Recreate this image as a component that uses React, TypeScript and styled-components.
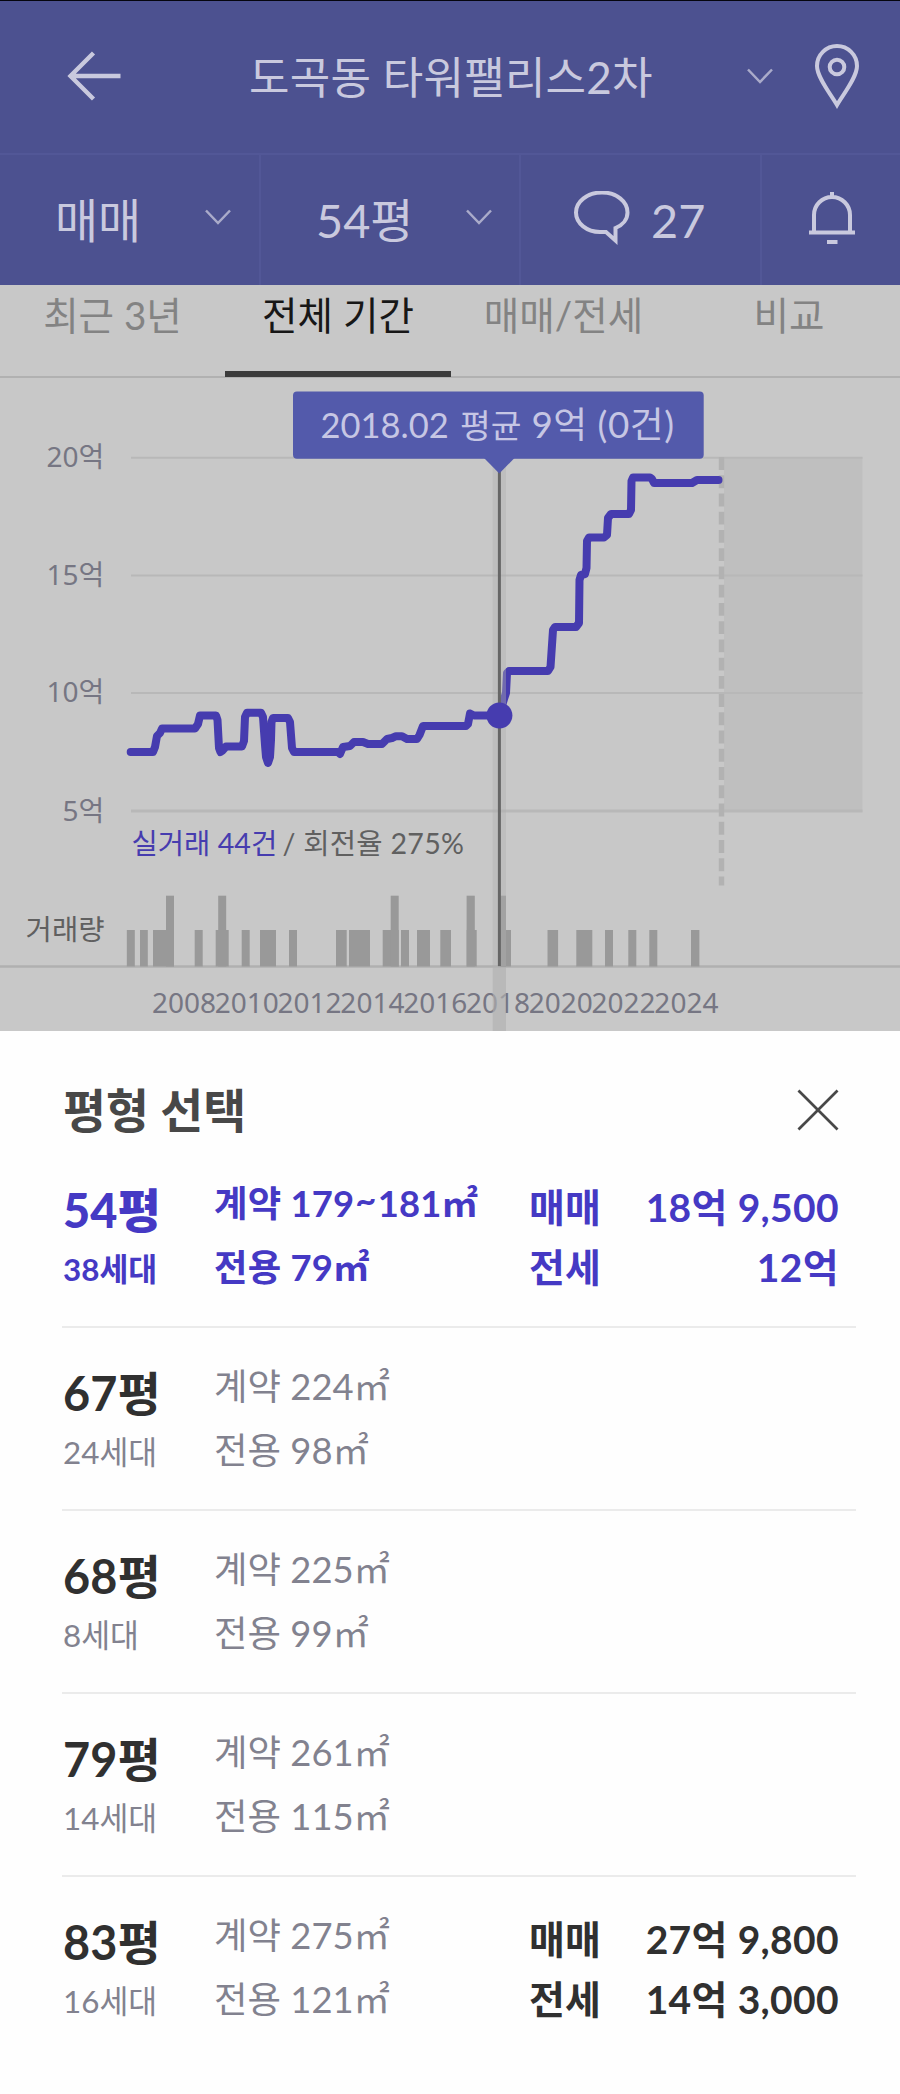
import React from 'react';
import styled, { createGlobalStyle } from 'styled-components';

const fontUi = `Lato, 'Noto Sans CJK KR', sans-serif`;
const fontAxis = `'Noto Sans', 'Noto Sans CJK KR', sans-serif`;

const color = {
  bar: '#4c5190',
  barLine: '#525797',
  barText: '#c9c9de',
  dim: '#c8c8c8',
  line: '#463caf',
  accent: '#4539c4',
  ink: '#303030',
  muted: '#82828f',
};

const GlobalStyle = createGlobalStyle`
  * { box-sizing: border-box; }
  body { margin: 0; background: #fff; font-family: ${fontUi}; }
`;

const Page = styled.main`
  width: 900px;
  height: 2094px;
  overflow: hidden;
  display: flex;
  flex-direction: column;
  background: #fefefe;
`;

const TitleBar = styled.header`
  height: 153px;
  border-top: 1px solid #05050f;
  background: ${color.bar};
  color: ${color.barText};
  display: flex;
  align-items: center;
  padding: 0 40px 2px 66px;
`;

const BackButton = styled.button`
  all: unset;
  display: flex;
  width: 183px;
`;

const ComplexName = styled.h1`
  margin: 0;
  padding-top: 2px;
  flex: 1;
  font-size: 44px;
  font-weight: 400;
  line-height: 60px;
  letter-spacing: 0.25px;
  white-space: nowrap;
`;

const Icon = styled.svg`
  display: block;
  flex: none;
  fill: none;
  stroke: currentColor;
`;

const TitleActions = styled.div`
  display: flex;
  align-items: center;
  gap: 41px;
`;

const FilterBar = styled.div`
  height: 132px;
  background: ${color.bar};
  color: ${color.barText};
  border-top: 2px solid ${color.barLine};
  display: grid;
  grid-template-columns: 261px 260px 241px 1fr;
`;

const FilterCell = styled.button<{ $pad: string; $between?: boolean }>`
  all: unset;
  box-sizing: border-box;
  display: flex;
  align-items: center;
  justify-content: ${(p) => (p.$between ? 'space-between' : 'flex-start')};
  gap: 20px;
  padding: ${(p) => p.$pad};
  border-right: 2px solid ${color.barLine};
  font-size: 46.8px;
  line-height: 60px;
  &:last-child { border-right: 0; }
  ${Icon} { margin-bottom: ${(p) => (p.$between ? '7px' : '0')}; }
`;

const Tabs = styled.nav`
  height: 93px;
  background: ${color.dim};
  border-bottom: 2px solid #b1b1b1;
  display: grid;
  grid-template-columns: 225px 226px 225px 226px;
`;

const Tab = styled.button<{ $active?: boolean }>`
  all: unset;
  box-sizing: border-box;
  height: 92px;
  display: flex;
  justify-content: center;
  align-items: flex-start;
  font-size: 38.6px;
  line-height: 60px;
  white-space: nowrap;
  color: ${(p) => (p.$active ? '#171717' : '#838383')};
  border-bottom: ${(p) => (p.$active ? '6px solid #3c3c3c' : '0')};
`;

const ChartSvg = styled.svg`
  display: block;
  flex: none;
  background: ${color.dim};
`;

const AxisText = styled.text`
  font-family: ${fontAxis};
  font-size: 28px;
  fill: #767683;
`;

const NoteText = styled.text<{ $fill?: string }>`
  font-family: ${fontUi};
  font-size: 28.6px;
  fill: ${(p) => p.$fill ?? '#606060'};
`;

const TipText = styled.text<{ $size: number }>`
  font-family: ${fontUi};
  font-size: ${(p) => p.$size}px;
  fill: #c6c6e4;
`;

const Sheet = styled.section`
  flex: 1;
  background: #fefefe;
  padding: 49px 44px 0 62px;
`;

const SheetHeader = styled.div`
  display: flex;
  justify-content: space-between;
  height: 65px;
  padding: 0 17px 0 1px;
  color: #484848;
`;

const SheetTitle = styled.h2`
  margin: 0;
  font-size: 46.7px;
  line-height: 60px;
  font-weight: 700;
`;

const CloseButton = styled.button`
  all: unset;
  display: flex;
  height: 60px;
  align-items: center;
`;

const List = styled.ul`
  list-style: none;
  margin: 0;
  padding: 0;
`;

const SizeRow = styled.li<{ $selected?: boolean }>`
  height: 183px;
  display: grid;
  grid-template-columns: 152px 315px 1fr;
  padding-right: 17px;
  color: ${(p) => (p.$selected ? color.accent : color.muted)};
  font-weight: ${(p) => (p.$selected ? 700 : 400)};
  border-bottom: 2px solid #ebebeb;
  &:last-child { border-bottom: 0; }
`;

const NameCol = styled.div`
  padding: 35px 0 0 1px;
  display: flex;
  flex-direction: column;
  gap: 9px;
`;

const SizeName = styled.strong<{ $selected?: boolean }>`
  font-size: 46.8px;
  line-height: 60px;
  letter-spacing: 0.2px;
  color: ${(p) => (p.$selected ? color.accent : color.ink)};
`;

const Households = styled.span`
  font-size: 31.4px;
  line-height: 40px;
`;

const AreaCol = styled.div<{ $selected?: boolean }>`
  padding-top: 26px;
  font-size: 36.4px;
  line-height: 64px;
  letter-spacing: ${(p) => (p.$selected ? '0.2px' : '0')};
  white-space: nowrap;
`;

const Tilde = styled.span`
  margin: 0 1px;
  line-height: 0;
  vertical-align: 4px;
`;

const PriceCol = styled.dl<{ $selected?: boolean }>`
  margin: 0;
  padding-top: 32px;
  font-size: 39px;
  font-weight: 700;
  line-height: 60px;
  white-space: nowrap;
  color: ${(p) => (p.$selected ? color.accent : color.ink)};
`;

const PriceLine = styled.div`
  display: flex;
  justify-content: space-between;
  dt, dd { margin: 0; }
  dd { letter-spacing: 0.35px; }
`;

const Chevron = () => (
  <Icon width="26" height="16" viewBox="0 0 26 16" strokeWidth="2.5">
    <path d="M1 1.5 13 14 25 1.5" opacity="0.75" />
  </Icon>
);

// Monthly average price, as plotted points.
const pricePoints: [number, number][] = [
  [130.7, 752], [153, 752], [155, 747], [157, 736], [160, 733], [162, 728.5], [195, 728.5], [198, 724], [200, 715.5],
  [216, 715.5], [217.5, 720], [219, 748], [220.5, 752], [222, 751], [226, 746.5], [242, 746.5], [244, 741],
  [245, 717], [247, 712.8], [261, 712.8], [263, 717], [265, 745], [266, 757], [268, 763], [270, 757], [271, 740],
  [271.5, 722], [273, 718], [288, 718], [290, 722], [292, 748], [294, 752], [338, 752], [340, 754], [343, 747],
  [350, 746], [354, 742], [363, 742], [368, 744], [382, 744], [387, 739], [392, 738], [396, 736.2], [402, 736.2],
  [407, 739], [417, 739], [419.5, 735], [423, 726], [466, 726], [468, 724], [470, 713.5], [474, 715.5],
  [499, 715.5], [504, 699], [506, 693], [507, 673], [509, 671], [548, 671], [550.5, 667], [553, 630], [555, 627],
  [576, 627], [579, 623], [579.5, 580], [581, 575], [585, 574], [586.5, 568], [587, 541], [589, 537.5],
  [604, 537.5], [607, 535], [608, 518], [611, 514], [629, 514], [631, 510], [631.5, 481], [633, 477.5],
  [650, 477.5], [652, 479], [654, 483], [692, 483], [697, 480], [718.5, 480],
];

// Trade volume bars: [x, width].
const lowBars: [number, number][] = [
  [126.8, 8], [140, 7.8], [153, 21], [194.7, 8], [215.7, 13], [241.7, 8], [260, 16], [289, 8], [336, 10.7],
  [349, 21], [382.7, 16], [401, 8], [417, 13], [440.3, 10.7], [466.7, 10], [500, 11], [547.5, 10.6],
  [576.3, 16], [605, 8], [628.3, 8], [649.3, 8], [691, 8.4],
];
const tallBars: [number, number][] = [[166, 8], [218.2, 8], [390.7, 8], [466.6, 8.2], [498, 8]];

const years = [2008, 2010, 2012, 2014, 2016, 2018, 2020, 2022, 2024];

const levels = [
  { label: '20억', y: 457.8, base: 467 },
  { label: '15억', y: 575.5, base: 584.5 },
  { label: '10억', y: 693, base: 702 },
  { label: '5억', y: 811, base: 820.5 },
];

const PriceChart = () => (
  <ChartSvg width="900" height="653" viewBox="0 378 900 653">
    <rect x="724" y="457" width="138.5" height="355" fill="#bfbfbf" />
    {levels.map((l, i) => (
      <g key={l.label}>
        <AxisText x="104.3" y={l.base} textAnchor="end">{l.label}</AxisText>
        <line x1="131" x2="862.5" y1={l.y} y2={l.y} stroke="#b8b8b8" strokeWidth={i === 3 ? 2.8 : 2} />
      </g>
    ))}
    <line x1="721.5" x2="721.5" y1="457" y2="885.5" stroke="#b2b2b2" strokeWidth="5.5" strokeDasharray="12.9 5.34" />
    <NoteText x="131.5" y="854" $fill={color.line}>실거래 44건</NoteText>
    <NoteText x="282.5" y="854" letterSpacing="0.25">/ 회전율 275%</NoteText>
    <NoteText x="104.5" y="939.5" textAnchor="end">거래량</NoteText>
    <line x1="0" x2="900" y1="966.5" y2="966.5" stroke="#b0b0b0" strokeWidth="2.5" />
    {lowBars.map(([x, w]) => <rect key={x} x={x} y="930" width={w} height="36.5" fill="#999" />)}
    {tallBars.map(([x, w]) => <rect key={x} x={x} y="895.7" width={w} height="70.8" fill="#999" />)}
    {years.map((y, i) => (
      <AxisText key={y} x={184 + i * 62.8} y="1012.7" textAnchor="middle">{y}</AxisText>
    ))}
    <polyline
      points={pricePoints.map((p) => p.join(',')).join(' ')}
      fill="none" stroke={color.line} strokeWidth="8" strokeLinejoin="round" strokeLinecap="round"
    />
    <rect x="492.7" y="457" width="13.3" height="509" fill="#b0b0b0" opacity="0.4" />
    <rect x="492.7" y="967.5" width="13.3" height="64" fill="#b0b0b0" opacity="0.65" />
    <line x1="499.4" x2="499.4" y1="460" y2="966" stroke="#666" strokeWidth="3" />
    <circle cx="499.4" cy="715.5" r="13" fill={color.line} />
    <rect x="293" y="391.5" width="410.7" height="67.2" rx="4" fill="#535aab" />
    <path d="M484 458 499.3 473.5 514.5 458Z" fill="#535aab" />
    <TipText x="320.5" y="438" $size={34.5}>2018.02</TipText>
    <TipText x="460" y="438" $size={33.4}>평균</TipText>
    <TipText x="531.5" y="438" $size={36.8} letterSpacing="0.5">9억 (0건)</TipText>
  </ChartSvg>
);

interface Size {
  name: string;
  homes: string;
  contract: string[];
  net: string;
  sale?: string;
  lease?: string;
}

const sizes: Size[] = [
  { name: '54평', homes: '38세대', contract: ['179', '181'], net: '79', sale: '18억 9,500', lease: '12억' },
  { name: '67평', homes: '24세대', contract: ['224'], net: '98' },
  { name: '68평', homes: '8세대', contract: ['225'], net: '99' },
  { name: '79평', homes: '14세대', contract: ['261'], net: '115' },
  { name: '83평', homes: '16세대', contract: ['275'], net: '121', sale: '27억 9,800', lease: '14억 3,000' },
];

export default function App() {
  return (
    <>
      <GlobalStyle />
      <Page>
        <TitleBar>
          <BackButton aria-label="뒤로">
            <Icon width="56" height="50" viewBox="0 0 56 50" strokeWidth="4.4">
              <path d="M54.5 25H4M27.5 2 4.5 25 27.5 48" />
            </Icon>
          </BackButton>
          <ComplexName>도곡동 타워팰리스2차</ComplexName>
          <TitleActions>
            <Chevron />
            <Icon width="46" height="66" viewBox="0 0 46 66" strokeWidth="4">
              <path d="M23 62C17 51.5 3 34.5 3 23a20 20 0 0 1 40 0C43 34.5 29 51.5 23 62Z" />
              <circle cx="23" cy="24" r="7.3" />
            </Icon>
          </TitleActions>
        </TitleBar>
        <FilterBar>
          <FilterCell $pad="0 28px 0 55px" $between>매매<Chevron /></FilterCell>
          <FilterCell $pad="0 27px 0 55px" $between>54평<Chevron /></FilterCell>
          <FilterCell $pad="0 0 0 52px">
            <Icon width="58" height="58" viewBox="0 0 58 58" strokeWidth="4">
              <path d="M29 1.5C14.500 1.5 3 10.5 3 21.500S14 41 27 41H33L42.500 49.500V37C50 34 54.500 28 54.500 21.500 54.500 10.500 43.500 1.500 29 1.500Z" />
            </Icon>
            27
          </FilterCell>
          <FilterCell $pad="0 0 4px 46px">
            <Icon width="48" height="54" viewBox="0 0 48 54" strokeWidth="4">
              <path d="M24 1v6M6 41V24a18 18 0 0 1 36 0V41M1 41.5H47M19 51H29.5" />
            </Icon>
          </FilterCell>
        </FilterBar>
        <Tabs>
          <Tab>최근 3년</Tab>
          <Tab $active>전체 기간</Tab>
          <Tab>매매/전세</Tab>
          <Tab>비교</Tab>
        </Tabs>
        <PriceChart />
        <Sheet>
          <SheetHeader>
            <SheetTitle>평형 선택</SheetTitle>
            <CloseButton aria-label="닫기">
              <Icon width="42" height="42" viewBox="0 0 43 43" strokeWidth="2.8">
                <path d="M1.5 1.5 41.5 41.5M41.5 1.5 1.5 41.5" />
              </Icon>
            </CloseButton>
          </SheetHeader>
          <List>
            {sizes.map((s, i) => {
              const selected = i === 0;
              const [from, to] = s.contract;
              return (
                <SizeRow key={s.name} $selected={selected}>
                  <NameCol>
                    <SizeName $selected={selected}>{s.name}</SizeName>
                    <Households>{s.homes}</Households>
                  </NameCol>
                  <AreaCol $selected={selected}>
                    <div>계약 {from}{to && <><Tilde>~</Tilde>{to}</>}㎡</div>
                    <div>전용 {s.net}㎡</div>
                  </AreaCol>
                  {s.sale && (
                    <PriceCol $selected={selected}>
                      <PriceLine><dt>매매</dt><dd>{s.sale}</dd></PriceLine>
                      <PriceLine><dt>전세</dt><dd>{s.lease}</dd></PriceLine>
                    </PriceCol>
                  )}
                </SizeRow>
              );
            })}
          </List>
        </Sheet>
      </Page>
    </>
  );
}
